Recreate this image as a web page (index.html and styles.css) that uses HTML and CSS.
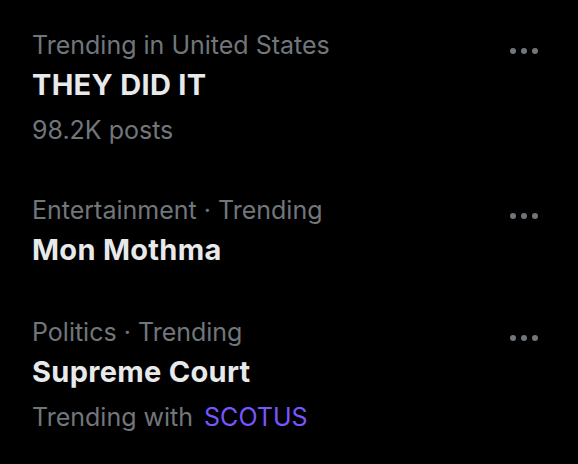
FILE: index.html
```html
<!DOCTYPE html>
<html>
<head>
<meta charset="utf-8">
<link rel="stylesheet" href="styles.css">
</head>
<body>
<div class="trends">
  <div class="trend">
    <div class="head">
      <span class="meta">Trending in United States</span>
      <svg class="more" width="32" height="40" viewBox="0 0 32 40"><circle cx="5" cy="26" r="3"/><circle cx="16" cy="26" r="3"/><circle cx="27" cy="26" r="3"/></svg>
    </div>
    <div class="title">THEY DID IT</div>
    <div class="meta sub">98.2K posts</div>
  </div>
  <div class="trend">
    <div class="head">
      <span class="meta">Entertainment · Trending</span>
      <svg class="more" width="32" height="40" viewBox="0 0 32 40"><circle cx="5" cy="26" r="3"/><circle cx="16" cy="26" r="3"/><circle cx="27" cy="26" r="3"/></svg>
    </div>
    <div class="title">Mon Mothma</div>
  </div>
  <div class="trend">
    <div class="head">
      <span class="meta">Politics · Trending</span>
      <svg class="more" width="32" height="40" viewBox="0 0 32 40"><circle cx="5" cy="26" r="3"/><circle cx="16" cy="26" r="3"/><circle cx="27" cy="26" r="3"/></svg>
    </div>
    <div class="title">Supreme Court</div>
    <div class="meta sub">Trending with <span class="tag">SCOTUS</span></div>
  </div>
</div>
</body>
</html>
```
FILE: styles.css
```css
html, body {
  margin: 0;
  padding: 0;
  background: #000;
}
body {
  width: 578px;
  height: 464px;
  overflow: hidden;
  font-family: Inter, "Noto Sans", sans-serif;
}
.trends {
  padding: 4.5px 38px 0 32px;
}
.trend {
  padding: 20.5px 0;
}
.trend:first-child {
  padding-bottom: 19px;
}
.trend:nth-child(2) {
  padding-bottom: 22px;
}
.head {
  display: flex;
  justify-content: space-between;
  align-items: flex-start;
  height: 40px;
}
.meta {
  font-size: 25px;
  line-height: 40px;
  color: #71767b;
}
.more {
  fill: #71767b;
  display: block;
}
.title {
  font-size: 29px;
  line-height: 40px;
  font-weight: 700;
  letter-spacing: 0.3px;
  color: #e7e9ea;
}
.sub {
  margin-top: 5px;
}
.tag {
  color: #7856ff;
  margin-left: 4px;
}
```
